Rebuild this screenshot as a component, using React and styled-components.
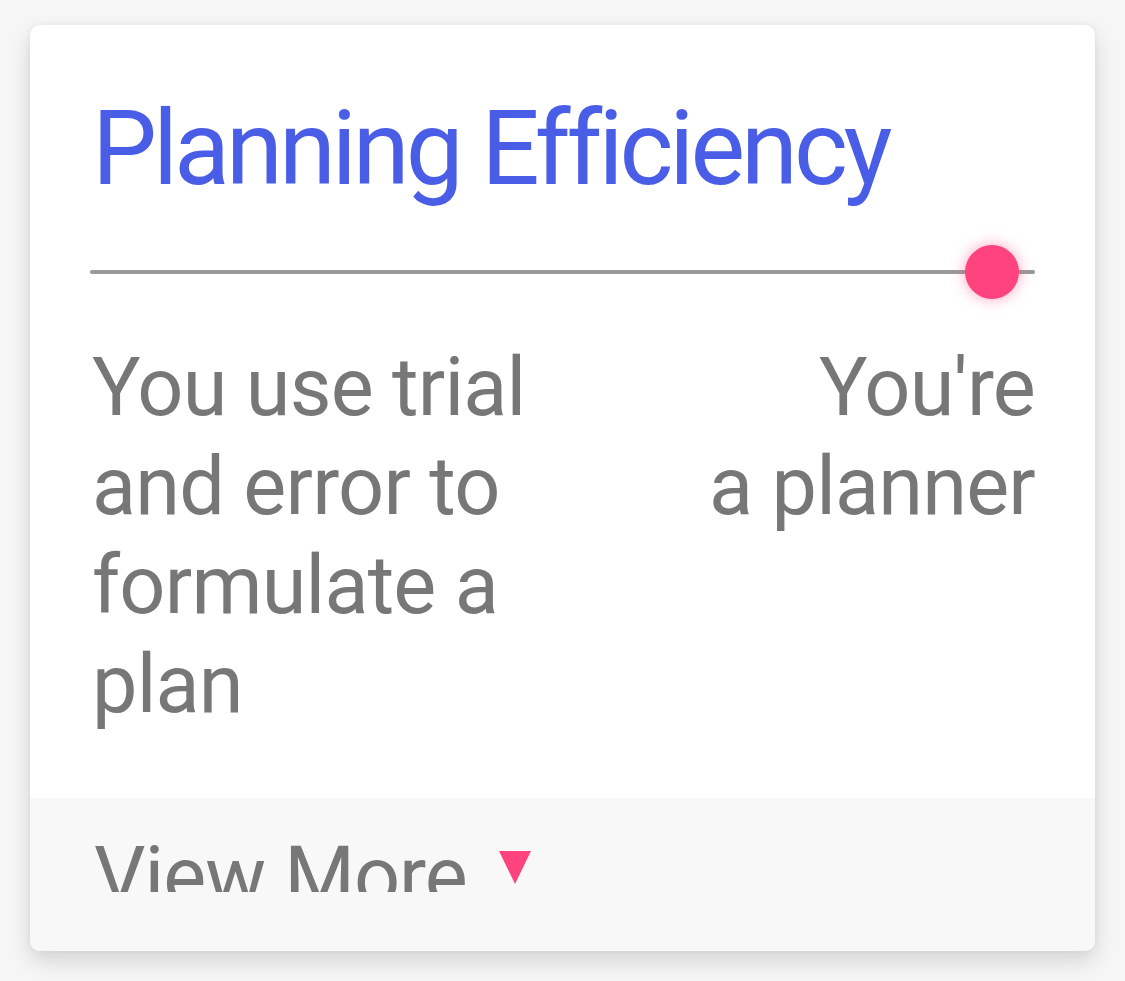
import React from 'react';
import styled, { createGlobalStyle } from 'styled-components';

const GlobalStyle = createGlobalStyle`
  html, body {
    margin: 0;
    padding: 0;
    background: #f6f6f6;
  }
  body {
    font-family: Roboto, "Noto Sans", sans-serif;
  }
`;

const Page = styled.div`
  padding: 25px 30px 30px 30px;
`;

const Card = styled.section`
  background: #ffffff;
  border-radius: 10px;
  box-shadow: 0 10px 22px rgba(0, 0, 0, 0.14), 0 0 6px rgba(0, 0, 0, 0.05);
  overflow: hidden;
`;

const Body = styled.div`
  padding: 72px 60px 64px 62px;
`;

const Title = styled.h1`
  margin: 0;
  font-size: 103px;
  font-weight: 400;
  line-height: 1;
  letter-spacing: -4px;
  color: #4a5de6;
`;

const Track = styled.div`
  position: relative;
  height: 4px;
  margin: 70px 0 0 -2px;
  border-radius: 2px;
  background: #9a9a9a;
`;

const Thumb = styled.span`
  position: absolute;
  top: 50%;
  width: 54px;
  height: 54px;
  margin: -27px 0 0 -27px;
  border-radius: 50%;
  background: #ff437f;
  box-shadow: 0 0 14px rgba(255, 67, 127, 0.5);
`;

const Labels = styled.div`
  display: flex;
  justify-content: space-between;
  align-items: flex-start;
  margin-top: 64px;
`;

const Label = styled.p`
  margin: 0;
  max-width: ${(p) => p.$width}px;
  font-size: 81px;
  line-height: 99px;
  letter-spacing: -0.8px;
  color: #777777;
  text-align: ${(p) => (p.$right ? 'right' : 'left')};
`;

const Footer = styled.div`
  display: flex;
  align-items: flex-start;
  height: 153px;
  padding: 38px 0 0 64px;
  box-sizing: border-box;
  background: #f8f8f8;
`;

const MoreText = styled.span`
  display: block;
  height: 56px;
  overflow: hidden;
  font-size: 81px;
  line-height: 1;
  letter-spacing: -1px;
  color: #777777;
`;

const Arrow = styled.span`
  width: 0;
  height: 0;
  margin: 15px 0 0 32px;
  border-left: 16px solid transparent;
  border-right: 16px solid transparent;
  border-top: 33px solid #ff437f;
`;

const value = 0.955;

export default function App() {
  return (
    <>
      <GlobalStyle />
      <Page>
        <Card>
          <Body>
            <Title>Planning Efficiency</Title>
            <Track>
              <Thumb style={{ left: `${value * 100}%` }} />
            </Track>
            <Labels>
              <Label $width={470}>You use trial and error to formulate a plan</Label>
              <Label $width={360} $right>
                You're
                <br />a planner
              </Label>
            </Labels>
          </Body>
          <Footer>
            <MoreText>View More</MoreText>
            <Arrow />
          </Footer>
        </Card>
      </Page>
    </>
  );
}
